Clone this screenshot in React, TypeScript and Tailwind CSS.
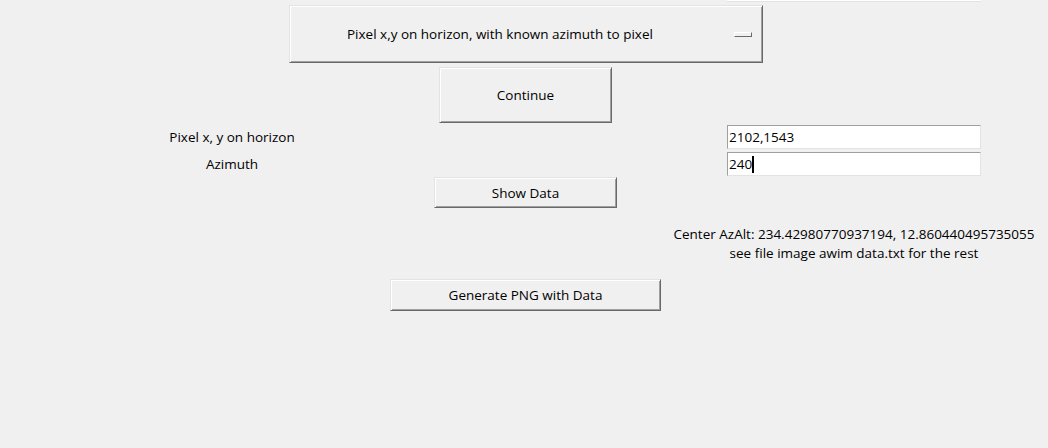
import React from "react";

// Tk-style raised button edge
const raised =
  "border border-t-[#e3e3e3] border-l-[#e3e3e3] border-r-[#696969] border-b-[#696969] shadow-[inset_1px_1px_0_#ffffff,inset_-1px_-1px_0_#a0a0a0] bg-[#f0f0f0]";

// Tk-style sunken entry edge
const sunken =
  "border border-t-[#a0a0a0] border-l-[#a0a0a0] border-r-[#e3e3e3] border-b-[#e3e3e3] bg-white";

const TkButton: React.FC<{ label: string; className?: string }> = ({ label, className }) => (
  <div className={`${raised} flex items-center justify-center text-black ${className ?? ""}`}>
    {label}
  </div>
);

export default function App() {
  return (
    <div
      className="w-[1048px] h-[448px] bg-[#f0f0f0] overflow-hidden text-[13.5px] leading-[18px] text-black"
      style={{ fontFamily: '"Open Sans", "Noto Sans", sans-serif' }}
    >
      {/* entry cut off at top */}
      <div className="ml-[727px] w-[254px] h-[2px] bg-white border-b border-[#e3e3e3]" />

      {/* option menu */}
      <div className={`${raised} ml-[289px] mt-[3px] w-[474px] h-[58px] flex items-center`}>
        <span className="ml-[57px]">Pixel x,y on horizon, with known azimuth to pixel</span>
        <span className="ml-auto mr-[10px] w-[18px] h-[5px] border border-t-white border-l-white border-r-[#696969] border-b-[#696969] bg-[#f0f0f0]" />
      </div>

      <TkButton label="Continue" className="ml-[439px] mt-[4px] w-[173px] h-[56px]" />

      <div className="flex items-center mt-[2px] h-[24px]">
        <div className="w-[464px] text-center">Pixel x, y on horizon</div>
        <div className={`${sunken} ml-[263px] w-[254px] h-[24px] pl-[1px] flex items-center`}>2102,1543</div>
      </div>
      <div className="flex items-center mt-[3px] h-[24px]">
        <div className="w-[464px] text-center">Azimuth</div>
        <div className={`${sunken} ml-[263px] w-[254px] h-[24px] pl-[1px] flex items-center`}>
          240<span className="w-[2px] h-[17px] bg-black" />
        </div>
      </div>

      <TkButton label="Show Data" className="ml-[434px] mt-[1px] w-[183px] h-[31px]" />

      <div className="mt-[17px] ml-[660px] w-[388px] text-center leading-[19px]">
        <div>Center AzAlt: 234.42980770937194, 12.860440495735055</div>
        <div>see file image awim data.txt for the rest</div>
      </div>

      <TkButton label="Generate PNG with Data" className="ml-[390px] mt-[16px] w-[271px] h-[32px]" />
    </div>
  );
}
